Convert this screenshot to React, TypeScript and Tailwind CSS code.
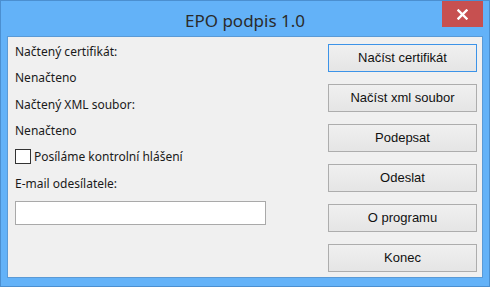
import React from "react";

const buttons = ["Načíst certifikát", "Načíst xml soubor", "Podepsat", "Odeslat", "O programu", "Konec"];

const App = () => {
  return (
    <div className="w-[490px] h-[287px] bg-[#63b2f8] border border-[#4b8fd0] flex flex-col px-[6px] pb-[8px]">
      <div className="relative h-[35px] shrink-0 flex items-center justify-center">
        <span className="text-[17px] text-[#2b2b2b] mt-[4px]" style={{ fontFamily: '"Noto Sans", sans-serif' }}>
          EPO podpis 1.0
        </span>
        <div className="absolute right-[0px] top-0 w-[41px] h-[26px] bg-[#c75050] flex items-center justify-center">
          <svg width="11" height="11" viewBox="0 0 11 11">
            <path d="M1.5 1.5 L9.5 9.5 M9.5 1.5 L1.5 9.5" stroke="#fff" strokeWidth="2.4" strokeLinecap="square" />
          </svg>
        </div>
      </div>
      <div className="flex-1 border border-[#5a9ad6] bg-[#f0f0f0] flex justify-between pl-[7px] pr-[5px] pt-[7px]">
        <div className="flex flex-col text-[12px] text-[#1a1a1a]" style={{ fontFamily: '"Noto Sans", sans-serif' }}>
          <div className="h-[16px] leading-[16px]">Načtený certifikát:</div>
          <div className="h-[16px] leading-[16px] mt-[10px]">Nenačteno</div>
          <div className="h-[16px] leading-[16px] mt-[11px]">Načtený XML soubor:</div>
          <div className="h-[16px] leading-[16px] mt-[10px]">Nenačteno</div>
          <label className="flex items-center gap-[3px] mt-[10px] h-[15px]">
            <span className="w-[16px] h-[15px] bg-white border border-[#333]" />
            <span className="leading-[16px]">Posíláme kontrolní hlášení</span>
          </label>
          <div className="h-[16px] leading-[16px] mt-[12px]">E-mail odesílatele:</div>
          <input className="mt-[9px] w-[251px] h-[24px] bg-white border border-[#a9a9a9] outline-none" />
        </div>
        <div className="flex flex-col gap-[12px]">
          {buttons.map((b, i) => (
            <button
              key={b}
              className={
                "w-[149px] h-[28px] border bg-gradient-to-b from-[#f0f0f0] to-[#e5e5e5] text-[13px] text-[#111] " +
                (i === 0 ? "border-[#3c93e8]" : "border-[#adadad]")
              }
              style={{ fontFamily: '"Liberation Sans", Arial, sans-serif' }}
            >
              {b}
            </button>
          ))}
        </div>
      </div>
    </div>
  );
};

export default App;
